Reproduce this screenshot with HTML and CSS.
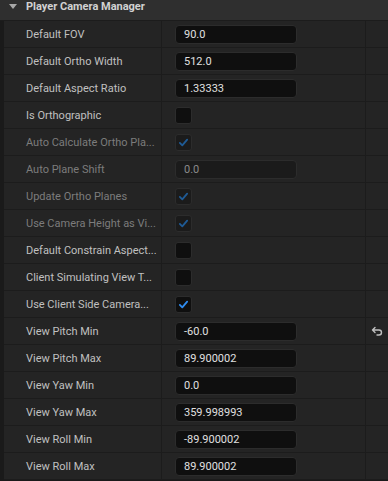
FILE: index.html
```html
<!DOCTYPE html>
<html lang="en">
<head>
    <meta charset="UTF-8">
    <title>Player Camera Manager</title>
    <link rel="stylesheet" href="styles.css">
</head>
<body>
    <div class="panel">
        <div class="category">
            <span class="arrow"></span>
            <span class="category-title">Player Camera Manager</span>
        </div>

        <div class="row">
            <div class="name">Default FOV</div>
            <div class="value"><div class="field">90.0</div></div>
            <div class="extra"></div>
        </div>
        <div class="row">
            <div class="name">Default Ortho Width</div>
            <div class="value"><div class="field">512.0</div></div>
            <div class="extra"></div>
        </div>
        <div class="row">
            <div class="name">Default Aspect Ratio</div>
            <div class="value"><div class="field">1.33333</div></div>
            <div class="extra"></div>
        </div>
        <div class="row">
            <div class="name">Is Orthographic</div>
            <div class="value"><div class="check"></div></div>
            <div class="extra"></div>
        </div>
        <div class="row disabled">
            <div class="name">Auto Calculate Ortho Pla...</div>
            <div class="value"><div class="check checked"><svg viewBox="0 0 16 16"><path d="M3.5 8.5 L6.5 11.5 L12.5 4.5"/></svg></div></div>
            <div class="extra"></div>
        </div>
        <div class="row disabled">
            <div class="name">Auto Plane Shift</div>
            <div class="value"><div class="field">0.0</div></div>
            <div class="extra"></div>
        </div>
        <div class="row disabled">
            <div class="name">Update Ortho Planes</div>
            <div class="value"><div class="check checked"><svg viewBox="0 0 16 16"><path d="M3.5 8.5 L6.5 11.5 L12.5 4.5"/></svg></div></div>
            <div class="extra"></div>
        </div>
        <div class="row disabled">
            <div class="name">Use Camera Height as Vi...</div>
            <div class="value"><div class="check checked"><svg viewBox="0 0 16 16"><path d="M3.5 8.5 L6.5 11.5 L12.5 4.5"/></svg></div></div>
            <div class="extra"></div>
        </div>
        <div class="row">
            <div class="name">Default Constrain Aspect...</div>
            <div class="value"><div class="check"></div></div>
            <div class="extra"></div>
        </div>
        <div class="row">
            <div class="name">Client Simulating View T...</div>
            <div class="value"><div class="check"></div></div>
            <div class="extra"></div>
        </div>
        <div class="row">
            <div class="name">Use Client Side Camera...</div>
            <div class="value"><div class="check checked"><svg viewBox="0 0 16 16"><path d="M3.5 8.5 L6.5 11.5 L12.5 4.5"/></svg></div></div>
            <div class="extra"></div>
        </div>
        <div class="row">
            <div class="name">View Pitch Min</div>
            <div class="value"><div class="field">-60.0</div></div>
            <div class="extra">
                <svg class="reset" viewBox="0 0 12 10"><path d="M4 1.5 L1.5 4 L4 6.5 M1.5 4 H8 A2.5 2.5 0 0 1 8 9 H6"/></svg>
            </div>
        </div>
        <div class="row">
            <div class="name">View Pitch Max</div>
            <div class="value"><div class="field">89.900002</div></div>
            <div class="extra"></div>
        </div>
        <div class="row">
            <div class="name">View Yaw Min</div>
            <div class="value"><div class="field">0.0</div></div>
            <div class="extra"></div>
        </div>
        <div class="row">
            <div class="name">View Yaw Max</div>
            <div class="value"><div class="field">359.998993</div></div>
            <div class="extra"></div>
        </div>
        <div class="row">
            <div class="name">View Roll Min</div>
            <div class="value"><div class="field">-89.900002</div></div>
            <div class="extra"></div>
        </div>
        <div class="row">
            <div class="name">View Roll Max</div>
            <div class="value"><div class="field">89.900002</div></div>
            <div class="extra"></div>
        </div>
    </div>
</body>
</html>
```

FILE: styles.css
```css
body {
    margin: 0;
    background-color: #1a1a1a;
    font-family: Roboto, "Noto Sans", sans-serif;
    font-size: 11px;
    color: #c0c0c0;
}

.panel {
    width: 388px;
}

.category {
    height: 13px;
    padding-bottom: 7px;
    background-color: #2f2f2f;
    border-bottom: 1px solid #1c1c1c;
    display: flex;
    align-items: center;
}

.arrow {
    width: 0;
    height: 0;
    margin-left: 9px;
    margin-right: 9px;
    border-left: 4px solid transparent;
    border-right: 4px solid transparent;
    border-top: 5px solid #a8a8a8;
}

.category-title {
    font-weight: bold;
    color: #d2d2d2;
}

.row {
    display: flex;
    height: 26px;
    margin-left: 4px;
    background-color: #242424;
    border-bottom: 1px solid #1c1c1c;
}

.name {
    width: 135px;
    padding-left: 22px;
    border-right: 1px solid #1c1c1c;
    display: flex;
    align-items: center;
    white-space: nowrap;
    overflow: hidden;
}

.value {
    width: 190px;
    padding-left: 13px;
    border-right: 1px solid #1c1c1c;
    display: flex;
    align-items: center;
}

.extra {
    flex: 1;
    display: flex;
    align-items: center;
    justify-content: flex-end;
    padding-right: 5px;
}

.field {
    width: 112px;
    height: 17px;
    padding-left: 8px;
    background-color: #0f0f0f;
    border: 1px solid #2c2c2c;
    border-radius: 4px;
    color: #e0e0e0;
    display: flex;
    align-items: center;
}

.check {
    width: 15px;
    height: 15px;
    background-color: #0f0f0f;
    border: 1px solid #2c2c2c;
    border-radius: 3px;
    display: flex;
    align-items: center;
    justify-content: center;
}

.check svg {
    width: 13px;
    height: 13px;
    fill: none;
    stroke: #2f8cf0;
    stroke-width: 2.2;
    stroke-linecap: round;
    stroke-linejoin: round;
}

.reset {
    width: 12px;
    height: 10px;
    fill: none;
    stroke: #c0c0c0;
    stroke-width: 1.4;
    stroke-linecap: round;
    stroke-linejoin: round;
}

/* read-only rows */
.disabled .name {
    color: #7c7c7c;
}

.disabled .field {
    background-color: #1b1b1b;
    color: #8a8a8a;
}

.disabled .check {
    background-color: #1b1b1b;
}

.disabled .check svg {
    stroke: #1f5b96;
}
```
